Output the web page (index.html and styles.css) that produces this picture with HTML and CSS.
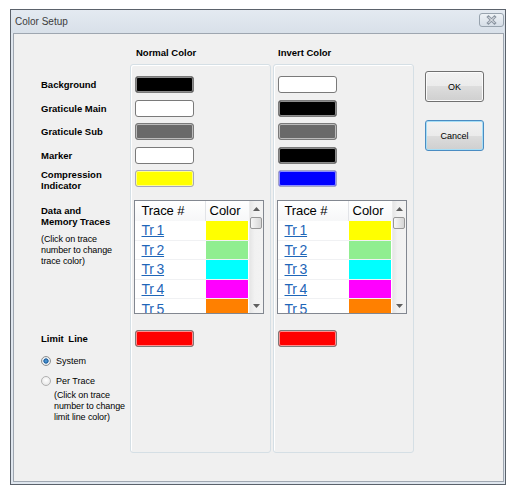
FILE: index.html
```html
<!DOCTYPE html>
<html>
<head>
<meta charset="utf-8">
<title>Color Setup</title>
<link rel="stylesheet" href="styles.css">
</head>
<body>
<div class="window">
  <div class="titlebar">
    <span class="title">Color Setup</span>
    <span class="close">
      <svg width="23" height="12" viewBox="0 0 23 12">
        <path d="M8.5 3 L14.5 9 M14.5 3 L8.5 9" stroke="#8d97a3" stroke-width="3" stroke-linecap="square" fill="none"/>
        <path d="M8.5 3 L14.5 9 M14.5 3 L8.5 9" stroke="#f3f5f8" stroke-width="1" fill="none"/>
      </svg>
    </span>
  </div>
  <div class="client">
    <div class="heads">
      <div class="hspace"></div>
      <div class="head hnormal">Normal Color</div>
      <div class="head hinvert">Invert Color</div>
    </div>
    <div class="main">
      <div class="labels">
        <div class="lrow">Background</div>
        <div class="lrow">Graticule Main</div>
        <div class="lrow">Graticule Sub</div>
        <div class="lrow">Marker</div>
        <div class="lrow two">Compression<br>Indicator</div>
        <div class="data-label">
          <div class="bold2">Data and<br>Memory Traces</div>
          <div class="note dnote">(Click on trace<br>number to change<br>trace color)</div>
        </div>
        <div class="lrow limit">Limit Line</div>
        <div class="radio-row first"><span class="radio checked"></span>System</div>
        <div class="radio-row"><span class="radio"></span>Per Trace</div>
        <div class="note rnote">(Click on trace<br>number to change<br>limit line color)</div>
      </div>

      <div class="panel">
        <div class="sw c-black"></div>
        <div class="sw c-white"></div>
        <div class="sw c-gray"></div>
        <div class="sw c-white"></div>
        <div class="sw c-yellow soft"></div>
        <div class="tbl">
          <div class="tcols">
            <div class="thead"><div class="th trace">Trace #</div><div class="th color">Color</div></div>
            <div class="tbody">
              <div class="tr"><div class="td trace"><a>Tr 1</a></div><div class="td color"><div class="fill c-yellow"></div></div></div>
              <div class="tr"><div class="td trace"><a>Tr 2</a></div><div class="td color"><div class="fill c-green"></div></div></div>
              <div class="tr"><div class="td trace"><a>Tr 3</a></div><div class="td color"><div class="fill c-cyan"></div></div></div>
              <div class="tr"><div class="td trace"><a>Tr 4</a></div><div class="td color"><div class="fill c-magenta"></div></div></div>
              <div class="tr"><div class="td trace"><a>Tr 5</a></div><div class="td color"><div class="fill c-orange"></div></div></div>
            </div>
          </div>
          <div class="sbar">
            <div class="sbtn up"><svg width="7" height="4" viewBox="0 0 7 4"><polygon points="0,4 7,4 3.5,0" fill="#5f5f5f"/></svg></div>
            <div class="thumb"></div>
            <div class="track"></div>
            <div class="sbtn down"><svg width="7" height="4" viewBox="0 0 7 4"><polygon points="0,0 7,0 3.5,4" fill="#5f5f5f"/></svg></div>
          </div>
        </div>
        <div class="sw c-red limit-sw"></div>
      </div>

      <div class="panel second">
        <div class="sw c-white"></div>
        <div class="sw c-black"></div>
        <div class="sw c-gray"></div>
        <div class="sw c-black"></div>
        <div class="sw c-blue soft"></div>
        <div class="tbl">
          <div class="tcols">
            <div class="thead"><div class="th trace">Trace #</div><div class="th color">Color</div></div>
            <div class="tbody">
              <div class="tr"><div class="td trace"><a>Tr 1</a></div><div class="td color"><div class="fill c-yellow"></div></div></div>
              <div class="tr"><div class="td trace"><a>Tr 2</a></div><div class="td color"><div class="fill c-green"></div></div></div>
              <div class="tr"><div class="td trace"><a>Tr 3</a></div><div class="td color"><div class="fill c-cyan"></div></div></div>
              <div class="tr"><div class="td trace"><a>Tr 4</a></div><div class="td color"><div class="fill c-magenta"></div></div></div>
              <div class="tr"><div class="td trace"><a>Tr 5</a></div><div class="td color"><div class="fill c-orange"></div></div></div>
            </div>
          </div>
          <div class="sbar">
            <div class="sbtn up"><svg width="7" height="4" viewBox="0 0 7 4"><polygon points="0,4 7,4 3.5,0" fill="#5f5f5f"/></svg></div>
            <div class="thumb"></div>
            <div class="track"></div>
            <div class="sbtn down"><svg width="7" height="4" viewBox="0 0 7 4"><polygon points="0,0 7,0 3.5,4" fill="#5f5f5f"/></svg></div>
          </div>
        </div>
        <div class="sw c-red limit-sw"></div>
      </div>

      <div class="buttons">
        <button class="btn">OK</button>
        <button class="btn focus">Cancel</button>
      </div>
    </div>
  </div>
</div>
</body>
</html>
```
FILE: styles.css
```css
html, body {
  margin: 0;
  padding: 0;
  background: #ffffff;
  font-family: "Liberation Sans", Arial, sans-serif;
}

.window {
  margin: 9px 0 0 10px;
  width: 496px;
  height: 476px;
  box-sizing: border-box;
  border: 1px solid #5b626b;
  background: #dfe6ee;
  display: flex;
  flex-direction: column;
}

.titlebar {
  flex: none;
  height: 23px;
  display: flex;
  align-items: flex-start;
  padding-left: 4px;
  background: linear-gradient(#e4eaf1, #d8e0e9);
}

.title {
  font-size: 10px;
  line-height: 23px;
  color: #3c3c3c;
}

.close {
  margin-left: auto;
  margin-top: 3px;
  margin-right: 1px;
  width: 25px;
  height: 14px;
  box-sizing: border-box;
  border: 1px solid #98a3ae;
  border-radius: 3px;
  background: linear-gradient(#eef2f6, #d6dee7);
  display: flex;
}

.client {
  flex: 1;
  margin: 0 1px 2px 2px;
  border: 1px solid #9ea6b0;
  background: #f0f0f0;
}

.heads {
  height: 30px;
  box-sizing: border-box;
  padding-top: 13px;
  display: flex;
  font-size: 9.5px;
  font-weight: bold;
  line-height: 12px;
  color: #000;
}

.hspace { width: 116px; }
.hnormal { width: 141px; box-sizing: border-box; padding-left: 6px; margin-right: 2px; }
.hinvert { width: 141px; box-sizing: border-box; padding-left: 5px; }

.main {
  display: flex;
  align-items: flex-start;
  padding-left: 27px;
}

.labels {
  width: 89px;
  padding-top: 12px;
  display: flex;
  flex-direction: column;
  font-size: 9.5px;
  color: #000;
}

.lrow {
  height: 17px;
  display: flex;
  align-items: center;
  font-weight: bold;
  line-height: 11px;
}

.lrow + .lrow { margin-top: 6.5px; }

.lrow.two { padding-top: 2px; box-sizing: border-box; }

.data-label {
  margin-top: 13px;
  height: 114px;
  box-sizing: border-box;
  padding-top: 5px;
}

.bold2 {
  font-weight: bold;
  line-height: 11px;
}

.note {
  font-size: 9px;
  line-height: 11px;
  letter-spacing: -0.1px;
}

.dnote { margin-top: 7px; }

.lrow.limit {
  margin-top: 16px;
  word-spacing: 2px;
}

.radio-row {
  margin-top: 8px;
  height: 12px;
  display: flex;
  align-items: center;
  font-size: 9px;
}

.radio {
  width: 10px;
  height: 10px;
  box-sizing: border-box;
  border-radius: 50%;
  border: 1px solid #b0b0b0;
  background: radial-gradient(circle at 50% 40%, #ffffff 0, #e6e6e6 5px);
  margin-right: 5px;
  flex: none;
}

.radio.checked {
  border-color: #8e8f8f;
  background: radial-gradient(circle at 50% 50%, #5aa4e0 0, #1c5f9e 2.3px, #dfe6ed 2.9px, #f6f6f6 5px);
}

.rnote {
  margin-top: 2.5px;
  padding-left: 13px;
}

.panel {
  width: 141px;
  height: 389px;
  box-sizing: border-box;
  border: 1px solid #d5dfe5;
  border-radius: 3px;
  box-shadow: inset 1px 1px 0 #ffffff;
  padding: 11px 3px;
  display: flex;
  flex-direction: column;
  margin-right: 2px;
}

.panel.second { margin-right: 11px; }

.sw {
  width: 59px;
  height: 17px;
  box-sizing: border-box;
  margin-left: 1px;
  border: 1px solid #7a7a7a;
  border-radius: 3px;
  box-shadow: inset 0 0 0 1px rgba(255, 255, 255, 0.55);
  flex: none;
}

.sw + .sw { margin-top: 6.5px; }

.sw.soft { border-color: #a4a6c4; }

.sw.limit-sw { margin-top: 16px; }

.c-black { background: #000000; }
.c-white { background: #ffffff; }
.c-gray { background: #696969; }
.c-yellow { background: #ffff00; }
.c-blue { background: #0000ff; }
.c-red { background: #ff0000; }
.c-green { background: #90ee90; }
.c-cyan { background: #00ffff; }
.c-magenta { background: #ff00ff; }
.c-orange { background: #ff8000; }

.tbl {
  margin-top: 13px;
  width: 130px;
  height: 114px;
  box-sizing: border-box;
  border: 1px solid #828790;
  background: #ffffff;
  display: flex;
  flex: none;
}

.tcols {
  width: 114px;
  display: flex;
  flex-direction: column;
}

.thead {
  height: 20px;
  display: flex;
  background: linear-gradient(#ffffff, #f6f7f8);
  flex: none;
}

.th {
  font-size: 13px;
  line-height: 20px;
  color: #000;
  box-sizing: border-box;
}

.th.trace {
  width: 71px;
  padding-left: 6.5px;
  border-right: 1px solid #e2e4e8;
  letter-spacing: -0.1px;
}

.th.color {
  width: 43px;
  padding-left: 3.5px;
}

.tbody {
  height: 92px;
  overflow: hidden;
}

.tr {
  height: 19.6px;
  display: flex;
  box-sizing: border-box;
  border-bottom: 1px solid #f0f1f3;
}

.td.trace {
  width: 71px;
  padding-left: 6.5px;
  box-sizing: border-box;
  display: flex;
  align-items: center;
}

.td.trace a {
  font-size: 14px;
  line-height: 16px;
  color: #1f66b8;
  text-decoration: underline;
  word-spacing: -1px;
  letter-spacing: -0.2px;
}

.td.color {
  width: 43px;
  display: flex;
}

.fill {
  flex: 1;
  margin-right: 1px;
}

.sbar {
  width: 14px;
  display: flex;
  flex-direction: column;
  background: linear-gradient(to right, #e6e6e6, #f1f1f1 35%, #f3f3f3);
  border-left: 1px solid #ececec;
  box-sizing: border-box;
}

.sbtn {
  height: 15px;
  display: flex;
  align-items: center;
  justify-content: center;
  flex: none;
}

.sbtn.up { height: 16px; }

.thumb {
  height: 12px;
  margin: 0 1px 0 0;
  box-sizing: border-box;
  border: 1px solid #979797;
  border-radius: 2px;
  background: linear-gradient(to right, #f6f6f6, #e6e6e6 50%, #d6d6d6);
  flex: none;
}

.track { flex: 1; }

.buttons {
  padding-top: 7px;
  display: flex;
  flex-direction: column;
}

.btn {
  display: block;
  width: 59px;
  height: 31px;
  box-sizing: border-box;
  padding: 0;
  border: 1px solid #707070;
  border-radius: 3px;
  background: linear-gradient(#f2f2f2 0%, #ebebeb 50%, #dddddd 50%, #cfcfcf 100%);
  box-shadow: inset 0 0 0 1px #fbfbfb;
  font-family: "Liberation Sans", Arial, sans-serif;
  font-size: 9px;
  color: #000;
}

.btn.focus {
  margin-top: 18px;
  border-color: #4a8cc2;
  box-shadow: inset 0 0 0 1px #a6def6;
}
```
